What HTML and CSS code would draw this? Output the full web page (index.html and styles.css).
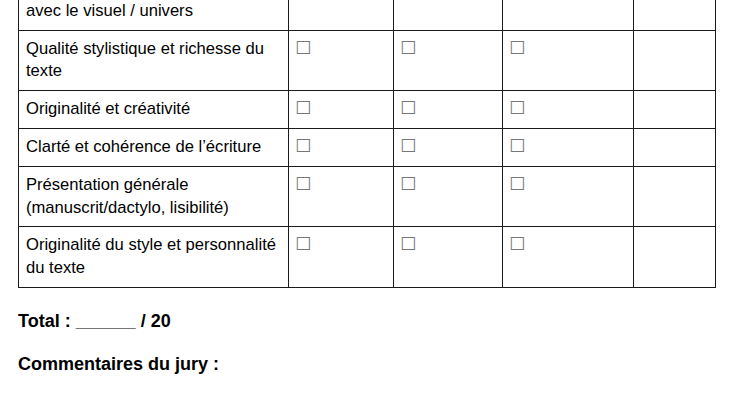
FILE: index.html
```html
<!DOCTYPE html>
<html lang="fr">
<head>
<meta charset="utf-8">
<link rel="stylesheet" href="styles.css">
</head>
<body>
<div class="page">
  <table class="grid">
    <colgroup>
      <col class="c1"><col class="c2"><col class="c3"><col class="c4"><col class="c5">
    </colgroup>
    <tr class="partial">
      <td>Cohérence du texte<br>avec le visuel / univers</td><td></td><td></td><td></td><td></td>
    </tr>
    <tr>
      <td>Qualité stylistique et richesse du texte</td>
      <td><span class="box">☐</span></td><td><span class="box">☐</span></td><td><span class="box">☐</span></td><td></td>
    </tr>
    <tr>
      <td>Originalité et créativité</td>
      <td><span class="box">☐</span></td><td><span class="box">☐</span></td><td><span class="box">☐</span></td><td></td>
    </tr>
    <tr>
      <td>Clarté et cohérence de l’écriture</td>
      <td><span class="box">☐</span></td><td><span class="box">☐</span></td><td><span class="box">☐</span></td><td></td>
    </tr>
    <tr>
      <td>Présentation générale (manuscrit/dactylo, lisibilité)</td>
      <td><span class="box">☐</span></td><td><span class="box">☐</span></td><td><span class="box">☐</span></td><td></td>
    </tr>
    <tr>
      <td>Originalité du style et personnalité du texte</td>
      <td><span class="box">☐</span></td><td><span class="box">☐</span></td><td><span class="box">☐</span></td><td></td>
    </tr>
  </table>
  <p class="total">Total : ______ / 20</p>
  <p class="comments">Commentaires du jury :</p>
</div>
</body>
</html>
```
FILE: styles.css
```css
html, body {
  margin: 0;
  padding: 0;
  background: #fff;
}
body {
  font-family: "Liberation Sans", Arial, sans-serif;
  color: #000;
  overflow: hidden;
  height: 410px;
}
.page {
  padding-left: 18px;
  margin-top: -31px;
}
.grid {
  border-collapse: collapse;
  table-layout: fixed;
  width: 698px;
  font-size: 16.6px;
  line-height: 22.8px;
}
.c1 { width: 270px; }
.c2 { width: 105px; }
.c3 { width: 109px; }
.c4 { width: 131px; }
.c5 { width: 82px; }
.grid td {
  border: 1px solid #1a1a1a;
  padding: 7px 6px 7px 7px;
  vertical-align: top;
}
.box {
  font-family: "DejaVu Sans", sans-serif;
  color: #777;
  font-size: 18px;
  line-height: 0;
  position: relative;
  left: -1px;
}
.total, .comments {
  font-weight: bold;
  font-size: 18px;
  margin: 0;
  line-height: 22px;
}
.total {
  margin-top: 22px;
}
.comments {
  margin-top: 21px;
}
```
